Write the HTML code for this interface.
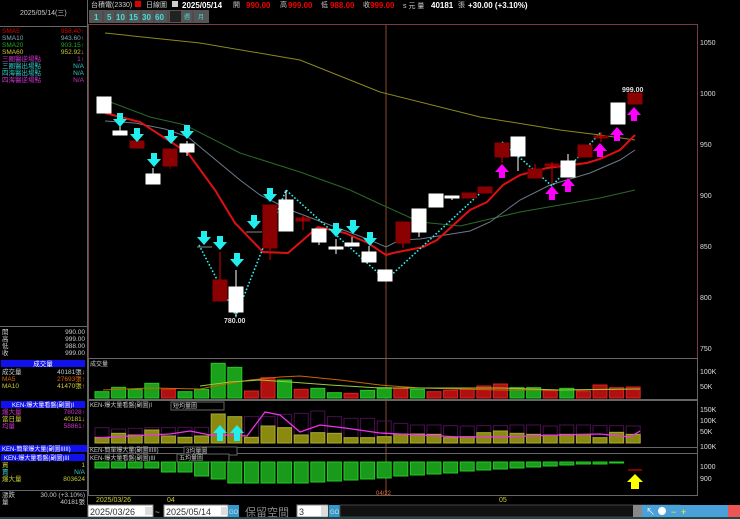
<!DOCTYPE html>
<html><head><meta charset="utf-8"><style>
html,body{margin:0;padding:0;background:#000;width:740px;height:519px;overflow:hidden}
svg{display:block}
text{font-family:"Liberation Sans","Noto Sans CJK TC",sans-serif}
</style></head><body>
<svg width="740" height="519" viewBox="0 0 740 519" xmlns="http://www.w3.org/2000/svg">
<rect width="740" height="519" fill="#000"/>
<line x1="87.5" y1="0" x2="87.5" y2="519" stroke="#666"/>
<line x1="0" y1="26.5" x2="88" y2="26.5" stroke="#666"/>
<text x="20" y="15" font-size="7" fill="#ccc">2025/05/14(三)</text>
<g font-size="6.5">
<text x="2" y="33" fill="#d00">SMA5</text><text x="84" y="33" fill="#d00" text-anchor="end">958.40↑</text>
<text x="2" y="40" fill="#7ab">SMA10</text><text x="84" y="40" fill="#7ab" text-anchor="end">943.60↑</text>
<text x="2" y="47" fill="#2a2">SMA20</text><text x="84" y="47" fill="#2a2" text-anchor="end">903.15↑</text>
<text x="2" y="54" fill="#cc3">SMA60</text><text x="84" y="54" fill="#cc3" text-anchor="end">952.92↓</text>
<text x="2" y="61" fill="#c3c">三圈醫逆場點</text><text x="84" y="61" fill="#c3c" text-anchor="end">1↑</text>
<text x="2" y="68" fill="#3cc">三圈醫出場點</text><text x="84" y="68" fill="#3cc" text-anchor="end">N/A</text>
<text x="2" y="75" fill="#3cc">四海醫出場點</text><text x="84" y="75" fill="#3cc" text-anchor="end">N/A</text>
<text x="2" y="82" fill="#c3c">四海醫逆場點</text><text x="84" y="82" fill="#c3c" text-anchor="end">N/A</text>
</g>
<line x1="0" y1="326.5" x2="88" y2="326.5" stroke="#666"/>
<g font-size="6.5" fill="#ccc">
<text x="2" y="334">開</text><text x="85" y="334" text-anchor="end">990.00</text>
<text x="2" y="341">高</text><text x="85" y="341" text-anchor="end">999.00</text>
<text x="2" y="348">低</text><text x="85" y="348" text-anchor="end">988.00</text>
<text x="2" y="355">收</text><text x="85" y="355" text-anchor="end">999.00</text>
</g>
<rect x="1" y="360" width="84" height="7" fill="#11e"/>
<text x="43" y="366" font-size="6.5" fill="#fff" text-anchor="middle">成交量</text>
<g font-size="6.5">
<text x="2" y="374" fill="#ccc">成交量</text><text x="85" y="374" fill="#ccc" text-anchor="end">40181張↓</text>
<text x="2" y="381" fill="#d60">MA5</text><text x="85" y="381" fill="#d60" text-anchor="end">27693張↑</text>
<text x="2" y="388" fill="#cc3">MA10</text><text x="85" y="388" fill="#cc3" text-anchor="end">41470張↑</text>
</g>
<rect x="1" y="401" width="84" height="7" fill="#11e"/>
<text x="43" y="407" font-size="6" fill="#fff" text-anchor="middle">KEN-爆大量看盤(副圖)I</text>
<g font-size="6.5">
<text x="2" y="414" fill="#c3c">爆大量</text><text x="85" y="414" fill="#c3c" text-anchor="end">78028↑</text>
<text x="2" y="421" fill="#cc3">當日量</text><text x="85" y="421" fill="#cc3" text-anchor="end">40181↓</text>
<text x="2" y="428" fill="#c3c">均量</text><text x="85" y="428" fill="#c3c" text-anchor="end">58861↑</text>
</g>
<rect x="0" y="445" width="87" height="7" fill="#11e"/>
<text x="2" y="451" font-size="6" fill="#fff">KEN-簡單爆大量(副圖IIIII)</text>
<rect x="1" y="454" width="84" height="7" fill="#11e"/>
<text x="4" y="460" font-size="6" fill="#fff">KEN-爆大量看盤(副圖)III</text>
<g font-size="6.5">
<text x="2" y="467" fill="#cc3">買</text><text x="85" y="467" fill="#cc3" text-anchor="end">1</text>
<text x="2" y="474" fill="#3cc">賣</text><text x="85" y="474" fill="#3cc" text-anchor="end">N/A</text>
<text x="2" y="481" fill="#cc3">爆大量</text><text x="85" y="481" fill="#cc3" text-anchor="end">803624</text>
</g>
<line x1="0" y1="490.5" x2="88" y2="490.5" stroke="#666"/>
<g font-size="6.5" fill="#ccc">
<text x="2" y="497">漲跌</text><text x="85" y="497" text-anchor="end">30.00 (+3.10%)</text>
<text x="2" y="504">量</text><text x="85" y="504" text-anchor="end">40181張</text>
</g>

<text x="91" y="7" font-size="7" fill="#ccc">台積電(2330)</text>
<rect x="135" y="1" width="6" height="6" fill="#d00"/>
<text x="146" y="7" font-size="7" fill="#ccc">日線圖</text>
<rect x="172" y="1" width="6" height="6" fill="#ccc"/>
<text x="182" y="8" font-size="8" font-weight="bold" fill="#fff">2025/05/14</text>
<text x="233" y="7" font-size="7" fill="#ccc">開</text><text x="246" y="8" font-size="8" font-weight="bold" fill="#e00">990.00</text>
<text x="280" y="7" font-size="7" fill="#ccc">高</text><text x="288" y="8" font-size="8" font-weight="bold" fill="#e00">999.00</text>
<text x="321" y="7" font-size="7" fill="#ccc">低</text><text x="330" y="8" font-size="8" font-weight="bold" fill="#e00">988.00</text>
<text x="363" y="7" font-size="7" fill="#ccc">收</text><text x="370" y="8" font-size="8" font-weight="bold" fill="#e00">999.00</text>
<text x="403" y="8" font-size="7" fill="#ccc">s 元  量</text>
<text x="431" y="8" font-size="8" font-weight="bold" fill="#fff">40181</text>
<text x="458" y="7" font-size="7" fill="#ccc">張</text>
<text x="468" y="8" font-size="8" font-weight="bold" fill="#fff">+30.00 (+3.10%)</text>
<rect x="89" y="10" width="120" height="13" fill="#555"/>
<g font-size="8" fill="#4dd" font-weight="bold">
<text x="94" y="20">1</text><text x="107" y="20">5</text><text x="116" y="20">10</text><text x="129" y="20">15</text><text x="142" y="20">30</text><text x="155" y="20">60</text>
</g>
<rect x="170" y="11" width="11" height="11" fill="#222"/>
<text x="184" y="19" font-size="6" fill="#4dd">週</text><text x="198" y="19" font-size="6" fill="#4dd">月</text>
<g stroke="#444"><line x1="103" y1="11" x2="103" y2="22"/><line x1="115" y1="11" x2="115" y2="22"/><line x1="128" y1="11" x2="128" y2="22"/><line x1="141" y1="11" x2="141" y2="22"/><line x1="154" y1="11" x2="154" y2="22"/><line x1="168" y1="11" x2="168" y2="22"/><line x1="193" y1="11" x2="193" y2="22"/></g>

<rect x="88.5" y="24.5" width="609" height="334" fill="none" stroke="#7a3a44"/>
<line x1="386" y1="25" x2="386" y2="495" stroke="#8a4a2a"/>
<rect x="88.5" y="358.5" width="609" height="41" fill="none" stroke="#666"/>
<rect x="88.5" y="400.5" width="609" height="47" fill="none" stroke="#666"/>
<rect x="88.5" y="447.5" width="609" height="6" fill="none" stroke="#666"/>
<rect x="88.5" y="453.5" width="609" height="42" fill="none" stroke="#666"/>
<g font-size="7" fill="#ddd">
<text x="700" y="45">1050</text><text x="700" y="96">1000</text><text x="700" y="147">950</text><text x="700" y="198">900</text><text x="700" y="249">850</text><text x="700" y="300">800</text><text x="700" y="351">750</text>
<text x="700" y="374">100K</text><text x="700" y="389">50K</text>
<text x="700" y="412">150K</text><text x="700" y="423">100K</text><text x="700" y="434">50K</text>
<text x="700" y="449">100K</text>
<text x="700" y="469">1000</text><text x="700" y="481">900</text>
</g>

<polyline fill="none" stroke="#8a8a20" stroke-width="1" points="105,33 200,43 300,60 380,92 480,117 560,130 600,135 635,140"/>
<polyline fill="none" stroke="#2a6a2a" stroke-width="1" points="105,100 150,117 185,125 240,153 300,172 350,190 380,204 420,222 460,226 520,212 560,205 600,198 635,190"/>
<polyline fill="none" stroke="#6a7a8a" stroke-width="1" points="105,121 135,123 165,129 188,137 240,180 260,195 290,210 330,225 370,240 386,247 400,240 420,239 470,231 490,222 520,200 550,185 590,173 620,160 635,150"/>
<polyline fill="none" stroke="#e01010" stroke-width="2" points="105,113 140,122 188,153 215,190 235,223 263,252 288,253 318,227 345,233 368,243 386,255 393,253 423,247 437,240 470,210 487,202 503,185 520,175 547,168 587,163 600,159 620,150 635,135"/>

<polyline fill="none" stroke="#3ee" stroke-width="1.6" stroke-dasharray="1.6,2" points="199,245 236,316 286,190 386,280 487,187"/>
<polyline fill="none" stroke="#3ee" stroke-width="1.6" stroke-dasharray="1.6,2" points="502,142 552,186 600,133"/>

<g fill="#fff" stroke="#fff">
<rect x="97" y="97" width="14" height="16"/>
<line x1="120" y1="125" x2="120" y2="132"/><rect x="113" y="131" width="14" height="4"/>
<rect x="146" y="174" width="14" height="10"/><line x1="153" y1="168" x2="153" y2="174"/>
<rect x="180" y="144" width="14" height="8"/><line x1="187" y1="141" x2="187" y2="156"/>
<rect x="229" y="287" width="14" height="25"/><line x1="236" y1="270" x2="236" y2="316"/>
<rect x="279" y="200" width="14" height="31"/><line x1="286" y1="190" x2="286" y2="200"/>
<rect x="312" y="229" width="14" height="13"/><line x1="319" y1="242" x2="319" y2="245"/>
<rect x="329" y="247" width="14" height="2"/><line x1="336" y1="239" x2="336" y2="254"/>
<rect x="345" y="243" width="14" height="3"/><line x1="352" y1="237" x2="352" y2="243"/>
<rect x="362" y="252" width="14" height="10"/><line x1="369" y1="246" x2="369" y2="252"/>
<rect x="378" y="270" width="14" height="11"/>
<rect x="412" y="209" width="14" height="23"/><line x1="419" y1="232" x2="419" y2="237"/>
<rect x="429" y="194" width="14" height="13"/>
<rect x="445" y="196" width="14" height="2"/><line x1="452" y1="196" x2="452" y2="200"/>
<rect x="511" y="137" width="14" height="19"/><line x1="518" y1="156" x2="518" y2="171"/>
<rect x="561" y="161" width="14" height="16"/><line x1="568" y1="154" x2="568" y2="161"/>
<rect x="611" y="103" width="14" height="21"/>
</g>
<g fill="#8b0000" stroke="#8b0000">
<rect x="130" y="141" width="14" height="7"/>
<rect x="163" y="149" width="14" height="17"/><line x1="170" y1="166" x2="170" y2="169"/>
<rect x="213" y="280" width="14" height="21"/><line x1="220" y1="252" x2="220" y2="280" stroke="#d00"/>
<rect x="263" y="205" width="14" height="43"/><line x1="270" y1="248" x2="270" y2="260" stroke="#d00"/>
<rect x="296" y="218" width="14" height="3"/><line x1="303" y1="216" x2="303" y2="230" stroke="#d00"/>
<rect x="396" y="222" width="14" height="21"/><line x1="403" y1="243" x2="403" y2="248" stroke="#d00"/>
<rect x="462" y="193" width="14" height="5"/>
<rect x="478" y="187" width="14" height="6"/>
<rect x="495" y="143" width="14" height="14"/><line x1="502" y1="157" x2="502" y2="163" stroke="#d00"/>
<rect x="528" y="169" width="14" height="9"/><line x1="535" y1="164" x2="535" y2="169" stroke="#d00"/>
<rect x="545" y="164" width="14" height="2"/><line x1="552" y1="162" x2="552" y2="184" stroke="#d00"/>
<rect x="578" y="145" width="14" height="12"/>
<rect x="594" y="136" width="14" height="2"/><line x1="601" y1="132" x2="601" y2="142" stroke="#d00"/>
<rect x="628" y="93" width="14" height="11"/>
</g>
<line x1="197" y1="247" x2="212" y2="247" stroke="#888"/>
<line x1="246" y1="232" x2="262" y2="232" stroke="#888"/>
<text x="224" y="323" font-size="7" font-weight="bold" fill="#ddd">780.00</text>
<text x="622" y="92" font-size="7" font-weight="bold" fill="#ddd">999.00</text>

<defs>
<path id="da" d="M-3,0 h6 v6 h4 l-7,8 l-7,-8 h4 z" fill="#2ee"/>
<path id="ua" d="M-3,14 h6 v-6 h4 l-7,-8 l-7,8 h4 z" fill="#f0f"/>
</defs>
<use href="#da" x="120" y="113"/><use href="#da" x="137" y="128"/><use href="#da" x="154" y="153"/>
<use href="#da" x="171" y="130"/><use href="#da" x="187" y="125"/><use href="#da" x="204" y="231"/>
<use href="#da" x="220" y="236"/><use href="#da" x="237" y="253"/><use href="#da" x="254" y="215"/>
<use href="#da" x="270" y="188"/><use href="#da" x="336" y="223"/><use href="#da" x="353" y="220"/>
<use href="#da" x="370" y="232"/>
<use href="#ua" x="502" y="164"/><use href="#ua" x="552" y="186"/><use href="#ua" x="568" y="178"/>
<use href="#ua" x="600" y="143"/><use href="#ua" x="617" y="127"/><use href="#ua" x="634" y="107"/>

<text x="90" y="366" font-size="6" fill="#ccc">成交量</text>
<g id="vol"></g>
<polyline fill="none" stroke="#c60" stroke-width="1" points="103,390 150,388 200,389 220,385 250,380 280,377 300,376 340,380 380,385 420,388 460,389 500,390 560,390 640,389"/>
<polyline fill="none" stroke="#9c3" stroke-width="1" points="200,386 230,382 260,380 290,382 330,385 380,388 440,388 500,388 560,390 640,389"/>

<text x="90" y="407" font-size="6" fill="#ccc">KEN-爆大量看盤(副圖)I</text>
<rect x="171" y="402" width="53" height="8" fill="#000" stroke="#666"/>
<text x="173" y="408" font-size="6" fill="#ccc">短均量圖</text>
<g id="p2"></g>
<text x="90" y="452" font-size="6" fill="#ccc">KEN-簡單爆大量(副圖IIIII)</text>
<rect x="184" y="447" width="53" height="8" fill="#000" stroke="#666"/>
<text x="186" y="453" font-size="6" fill="#ccc">3均量圖</text>
<text x="90" y="460" font-size="6" fill="#ccc">KEN-爆大量看盤(副圖)III</text>
<rect x="177" y="454" width="52" height="8" fill="#000" stroke="#666"/>
<text x="179" y="460" font-size="6" fill="#ccc">五均量圖</text>
<g id="p3"></g>
<line x1="628" y1="470" x2="642" y2="470" stroke="#a00" stroke-width="1.5"/>
<path d="M635,474 l8,8 h-4 v7 h-8 v-7 h-4 z" fill="#ff0"/>

<g font-size="7" fill="#cc3">
<text x="96" y="502">2025/03/26</text><text x="167" y="502">04</text><text x="499" y="502">05</text>
</g>
<text x="376" y="495" font-size="6" fill="#e63">04/22</text>

<rect x="0" y="505" width="740" height="14" fill="#000"/>
<rect x="88" y="505" width="65" height="12" fill="#fff" stroke="#888"/>
<text x="90" y="515" font-size="9" fill="#333">2025/03/26</text>
<rect x="145" y="507" width="7" height="8" fill="#ddd"/>
<text x="155" y="515" font-size="8" fill="#ccc">~</text>
<rect x="164" y="505" width="64" height="12" fill="#fff" stroke="#888"/>
<text x="166" y="515" font-size="9" fill="#333">2025/05/14</text>
<rect x="221" y="507" width="7" height="8" fill="#ddd"/>
<rect x="228" y="505" width="11" height="12" fill="#39c"/>
<text x="229" y="514" font-size="6" fill="#ddd">GO</text>
<text x="245" y="516" font-size="11" fill="#888">保留空間</text>
<rect x="297" y="505" width="31" height="12" fill="#fff" stroke="#888"/>
<text x="299" y="515" font-size="9" fill="#333">3</text>
<rect x="321" y="506" width="7" height="10" fill="#ddd"/>
<rect x="329" y="505" width="11" height="12" fill="#39c"/>
<text x="330" y="514" font-size="6" fill="#ddd">GO</text>
<rect x="340" y="505" width="340" height="12" fill="#111" stroke="#444"/>
<rect x="633" y="505" width="107" height="12" fill="#4aa0d8"/>
<rect x="633" y="505" width="9" height="12" fill="#888"/>
<g fill="#fff" font-size="9"><text x="646" y="515">↖</text><text x="671" y="515" fill="#ff0">−</text><text x="681" y="515" fill="#ff0">+</text></g>
<circle cx="662" cy="511" r="4" fill="#fff"/>
<rect x="728" y="505" width="12" height="12" fill="#e55"/>
<rect x="0" y="517" width="740" height="2" fill="#1a4a4a"/>
</svg>
<script>
(function(){
var NS="http://www.w3.org/2000/svg";
function r(g,x,y,w,h,f,s){var e=document.createElementNS(NS,"rect");e.setAttribute("x",x);e.setAttribute("y",y);e.setAttribute("width",w);e.setAttribute("height",h);e.setAttribute("fill",f);if(s){e.setAttribute("stroke",s);}g.appendChild(e);}
var vt=[110,97,103,85,103,110,103,25,37,108,68,75,103,100,113,115,106,98,100,103,110,106,103,93,87,98,98,107,100,108,90,98,96];
var vc="ggggrggggrrgrggrggrgrrrrrggrgrrrr";
var g=document.getElementById("vol"),p2=document.getElementById("p2"),p3=document.getElementById("p3");
var ot=[247,235,240,225,243,247,243,177,185,247,213,218,240,233,235,248,248,245,237,237,238,248,245,233,228,235,238,240,238,238,248,232,238];
var pt=[218,222,220,218,218,217,217,215,205,185,185,178,175,168,185,190,190,198,205,210,210,212,213,212,212,210,210,213,210,210,212,212,213];
var h3=[6,6,6,6,10,10,14,17,21,21,21,21,21,20,19,18,17,16,14,13,12,11,9,8,7,6,5,4,3,2,2,1,0];
for(var i=0;i<33;i++){var x=95+16.6*i;
var y=355+vt[i]/3;r(g,x,y,14,398-y,vc[i]=="g"?"#1aa01a":"#b01010",vc[i]=="g"?"#2c2":"#d22");
r(p2,x,355+pt[i]/3,14,443-(355+pt[i]/3),"none","#4a1050");
var y2=355+ot[i]/3;r(p2,x,y2,14,443-y2,"#8a8a10","#aa3");
if(h3[i]>0)r(p3,x,462,14,h3[i],"#1a9a1a","#2c2");}
var pl=document.createElementNS(NS,"polyline");pl.setAttribute("fill","none");pl.setAttribute("stroke","#e3e");pl.setAttribute("stroke-width","1.3");
pl.setAttribute("points","96,438 130,436 170,434 190,431 210,435 230,435 247,436 265,412 280,415 300,432 320,425 345,428 380,433 420,435 460,437 500,437 560,435 600,434 630,437 640,431");p2.appendChild(pl);
[[220,425],[237,425]].forEach(function(a){var p=document.createElementNS(NS,"path");p.setAttribute("d","M"+(a[0]-3)+","+(a[1]+16)+" v-8 h-4 l7,-8 l7,8 h-4 v8 z");p.setAttribute("fill","#2ee");p2.appendChild(p);});
})();
</script>
</body></html>
